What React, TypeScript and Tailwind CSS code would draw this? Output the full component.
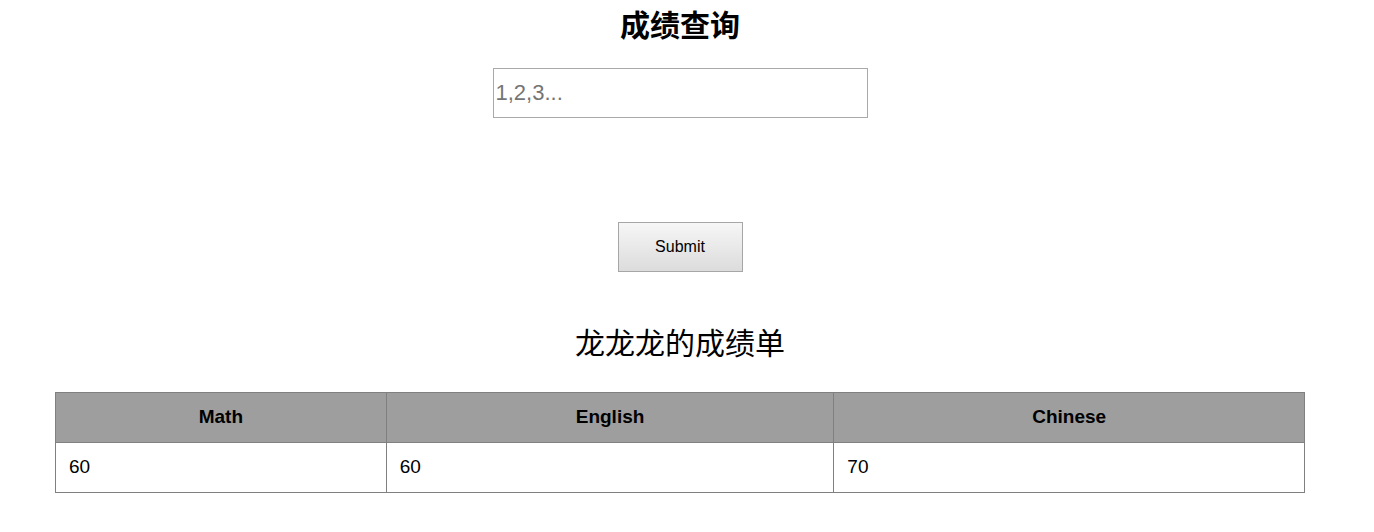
export default function App() {
  const subjects = ["Math", "English", "Chinese"];
  const scores = [60, 60, 70];
  const widths = ["w-[331px]", "w-[448px]", "w-[471px]"];

  return (
    <div className="w-[1360px] bg-white text-black font-['Liberation_Sans','Noto_Sans_CJK_SC',sans-serif]">
      <h1 className="pt-[6px] text-center text-[30px] leading-[40px] font-bold">成绩查询</h1>

      <div className="mt-[22px] flex justify-center">
        <input
          type="text"
          placeholder="1,2,3..."
          className="h-[50px] w-[375px] border border-[#a9a9a9] pl-[2px] pr-[2px] text-[22px] placeholder:text-[#757575] outline-none"
        />
      </div>

      <div className="mt-[104px] flex justify-center">
        <button className="h-[50px] w-[125px] border border-[#a6a6a6] bg-gradient-to-b from-[#f6f6f6] to-[#dcdcdc] text-[16px] text-black">
          Submit
        </button>
      </div>

      <h2 className="mt-[52px] text-center text-[30px] leading-[40px] font-normal">龙龙龙的成绩单</h2>

      <div className="mt-[28px] flex justify-center pb-[40px]">
        <table className="w-[1250px] border-collapse border border-[#808080] text-[19px]">
          <thead>
            <tr className="h-[50px] bg-[#9e9e9e]">
              {subjects.map((s, i) => (
                <th key={s} className={`${widths[i]} border border-[#808080] text-center font-bold`}>
                  {s}
                </th>
              ))}
            </tr>
          </thead>
          <tbody>
            <tr className="h-[50px]">
              {scores.map((v, i) => (
                <td key={i} className="border border-[#808080] px-[13px] text-left">
                  {v}
                </td>
              ))}
            </tr>
          </tbody>
        </table>
      </div>
    </div>
  );
}
